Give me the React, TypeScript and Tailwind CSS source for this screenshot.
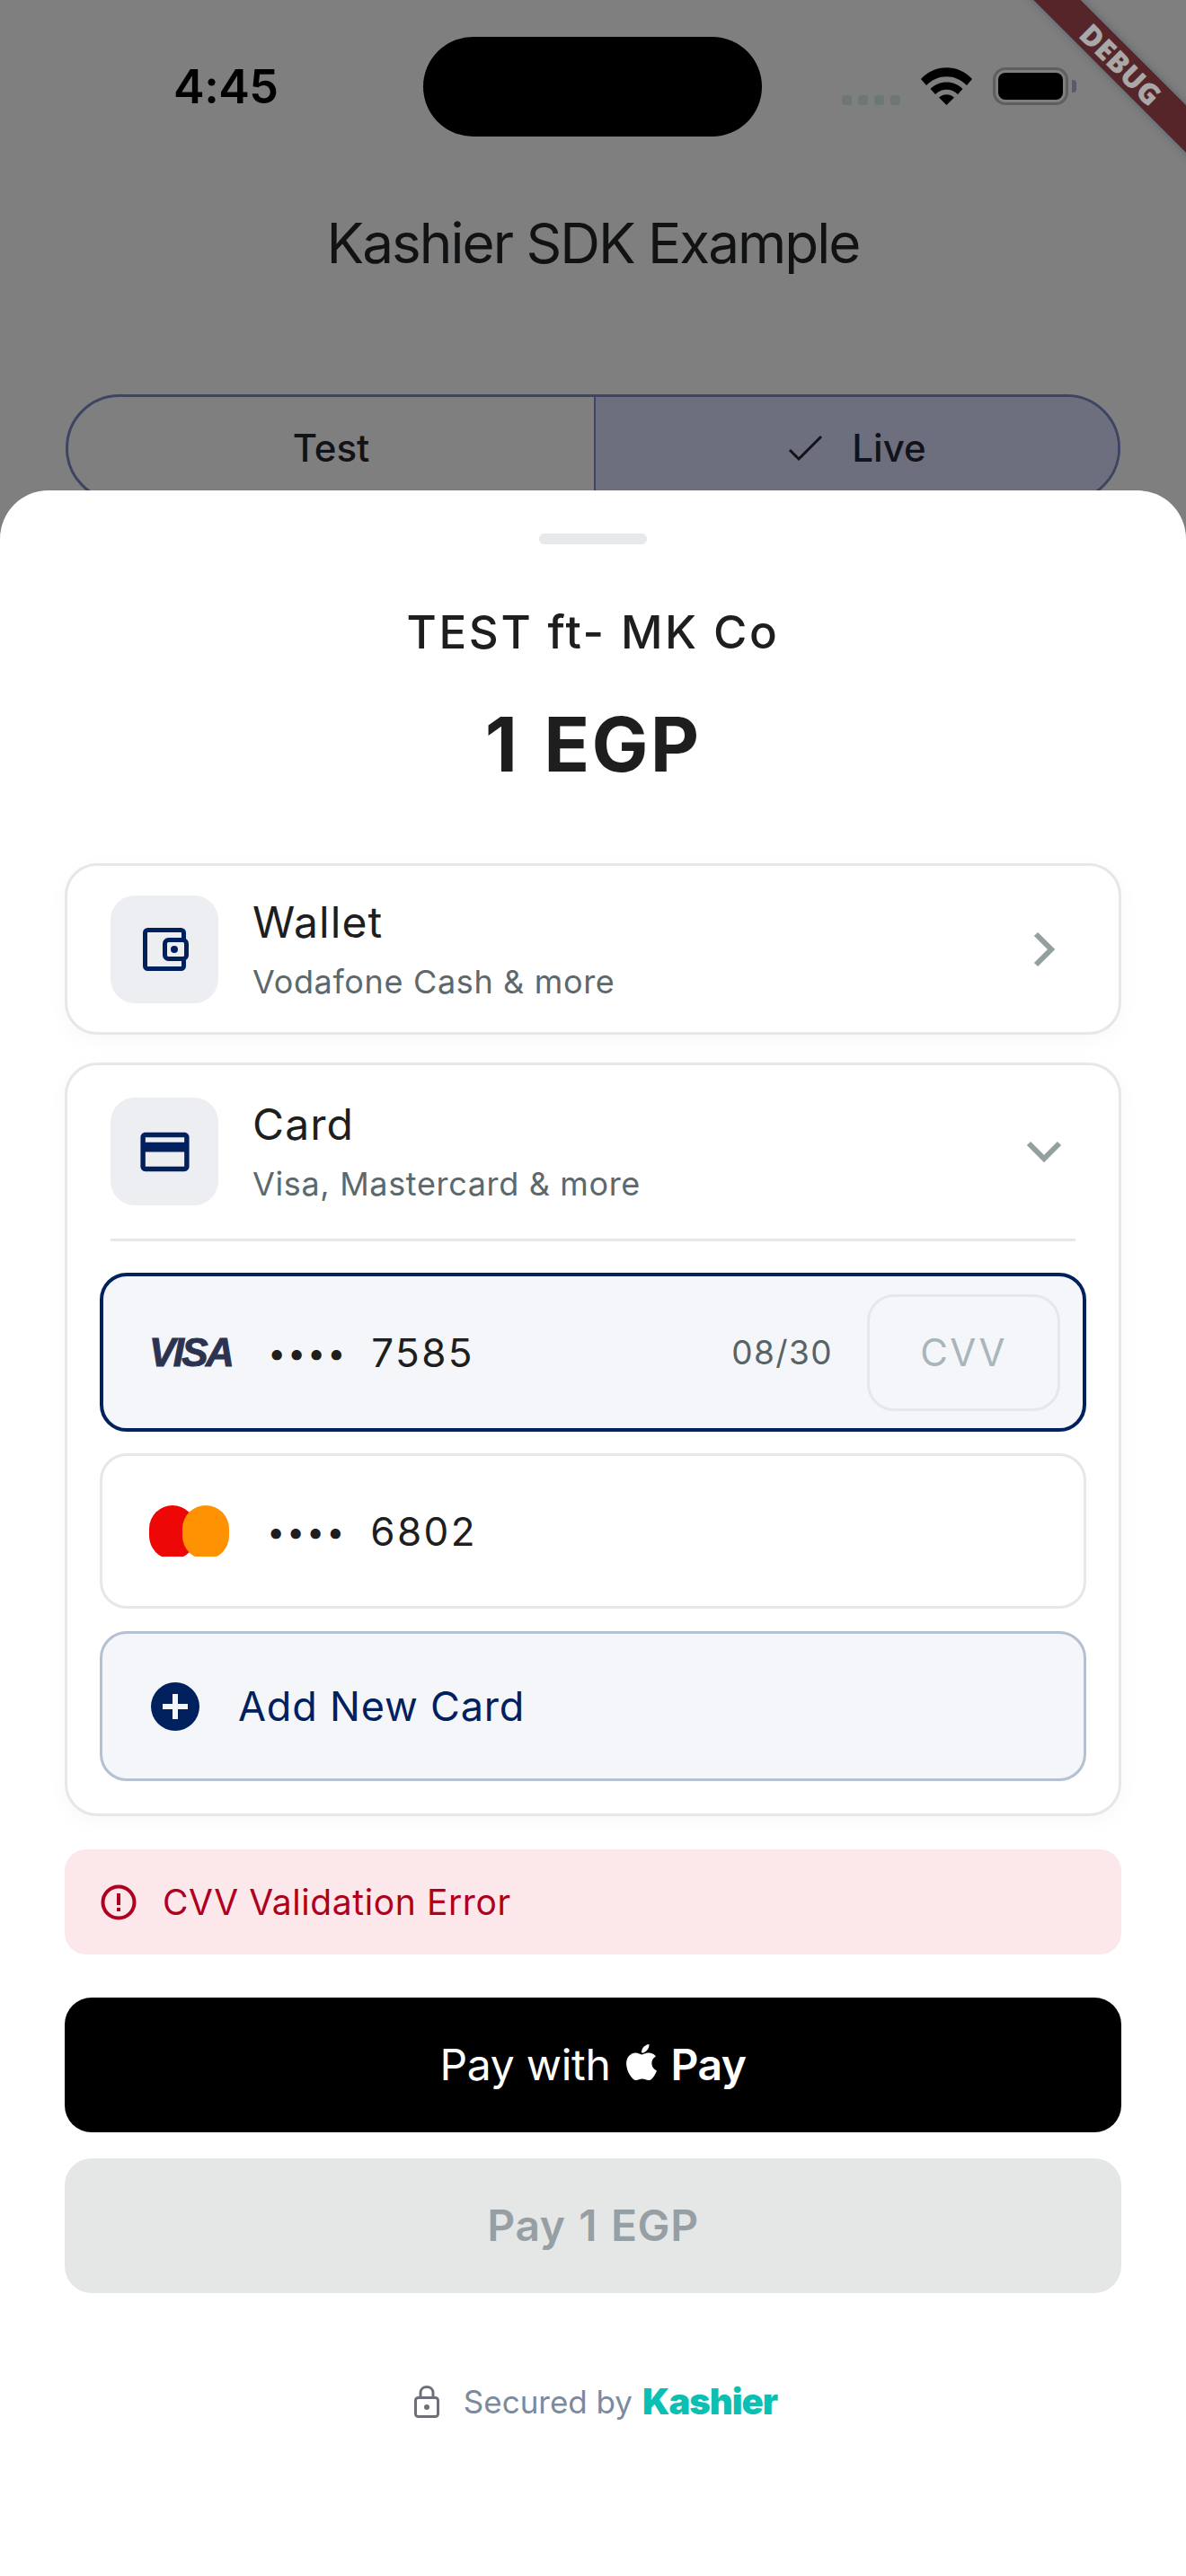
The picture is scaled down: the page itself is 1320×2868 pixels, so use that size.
import { FaApple } from 'react-icons/fa';
import { MdOutlineCreditCard } from 'react-icons/md';

function WalletIcon() {
  return (
    <svg width="60" height="60" viewBox="0 0 60 60" fill="none">
      <rect x="8.5" y="8.5" width="43" height="43" rx="3" stroke="#00205e" strokeWidth="5" />
      <rect x="30.5" y="19.5" width="24" height="21" rx="4" fill="#eceef2" stroke="#00205e" strokeWidth="5" />
      <circle cx="41" cy="30" r="4" fill="#00205e" />
    </svg>
  );
}

function WifiIcon() {
  return (
    <svg width="57" height="42" viewBox="0 0 57 42" fill="#000">
      <path d="M0 13C15-4 42-4 57 13L51 20C38 7 19 7 6 20Z" />
      <path d="M10.5 24C20 14 37 14 46.5 24L41 30C34 23 23 23 16 30Z" />
      <path d="M20 33.5C25 29 32 29 37 33.5L28.5 42Z" />
    </svg>
  );
}

function StatusBar() {
  return (
    <div className="flex pt-[41px] pl-[193px]">
      <div className="w-[278px] h-[76px] flex items-end">
        <span className="text-[52px] leading-[50px] font-semibold text-black tracking-[-0.5px] mb-[-5px]">4:45</span>
      </div>
      <div className="w-[377px] h-[111px] rounded-full bg-black" />
      <div className="h-[76px] flex items-end ml-[89px]">
        <div className="flex gap-[7px] mb-0">
          {[0, 1, 2, 3].map((i) => (
            <div key={i} className="w-[11px] h-[11px] rounded-[3px] bg-[#6e7678]" />
          ))}
        </div>
        <div className="ml-[23px]">
          <WifiIcon />
        </div>
        <div className="ml-[23px] w-[84px] h-[42px] rounded-[14px] border-[3px] border-[#5f5f61] flex items-center justify-center">
          <div className="w-[72px] h-[30px] rounded-[8px] bg-black" />
        </div>
        <div className="ml-[4px] mb-[14px] w-[5px] h-[14px] rounded-r-[4px] bg-[#555a75]" />
      </div>
    </div>
  );
}

function ModeSwitch() {
  return (
    <div className="mt-[128px] mx-[73px] h-[120px] rounded-full border-[3px] border-[#3e4463] flex overflow-hidden text-[42px] font-[450] text-[#111318]">
      <div className="w-[585px] flex items-start justify-center pt-[33px]">
        <span className="leading-[48px]">Test</span>
      </div>
      <div className="flex-1 border-l-[2px] border-[#3e4463] bg-[#6d6f7e] flex items-start justify-center pt-[33px]">
        <svg width="42" height="30" viewBox="0 0 42 30" fill="none" className="mt-[9px]">
          <path d="M3 17L13 27L38 2" stroke="#111318" strokeWidth="3" />
        </svg>
        <span className="leading-[48px] ml-[30px]">Live</span>
      </div>
    </div>
  );
}

function MethodHeader({ title, subtitle, icon, chevron }: { title: string; subtitle: string; icon: React.ReactNode; chevron: React.ReactNode }) {
  return (
    <div className="flex items-center">
      <div className="w-[120px] h-[120px] rounded-[27px] bg-[#eceef2] flex items-center justify-center">{icon}</div>
      <div className="ml-[38px] flex-1">
        <div className="text-[48px] leading-[54px] tracking-[1.1px] text-[#1e1e1e]">{title}</div>
        <div className="mt-[18px] text-[36px] leading-[42px] tracking-[0.65px] text-[#5d686c]">{subtitle}</div>
      </div>
      {chevron}
    </div>
  );
}

function CardNumber({ last4 }: { last4: string }) {
  return (
    <>
      <span className="text-[36px] leading-[40px] tracking-[1.8px] text-[#1e1e1e]">••••</span>
      <span className="ml-[27px] text-[44px] leading-[50px] tracking-[2.4px] text-[#1e1e1e]">{last4}</span>
    </>
  );
}

export default function App() {
  return (
    <div className="relative w-[1320px] h-[2868px] overflow-hidden bg-[#7f7f7f] font-['Inter','Noto_Sans',sans-serif]">
      <StatusBar />
      <div className="mt-[79px] text-center text-[62px] leading-[80px] tracking-[-2px] text-[#111214]">Kashier SDK Example</div>
      <ModeSwitch />

      {/* debug ribbon */}
      <div className="absolute left-[1048px] top-[53px] w-[400px] h-[37px] rotate-45 bg-[#55252a] shadow-[0_0_10px_rgba(70,90,100,0.7)] flex items-center justify-center">
        <span className="text-[32px] leading-[37px] font-extrabold tracking-[0.5px] text-[#aaa7a7] font-['Open_Sans',sans-serif]">DEBUG</span>
      </div>

      {/* bottom sheet */}
      <div className="absolute left-0 right-0 top-[546px] bottom-0 bg-white rounded-t-[54px] px-[72px]">
        <div className="mx-auto mt-[48px] w-[120px] h-[12px] rounded-[6px] bg-[#e6e8e9]" />
        <div className="mt-[68px] text-center text-[51px] leading-[60px] font-[550] tracking-[2.6px] text-[#1e1e1e]">TEST ft- MK Co</div>
        <div className="mt-[45px] text-center text-[84px] leading-[100px] font-bold tracking-[2.2px] [word-spacing:5px] text-[#1e1e1e]">1 EGP</div>

        <div className="mt-[82px] h-[191px] rounded-[36px] border-[3px] border-[#e5e7e8] bg-white shadow-[0_6px_24px_rgba(0,0,0,0.03)] px-[48px] flex items-center">
          <div className="w-full">
            <MethodHeader
              title="Wallet"
              subtitle="Vodafone Cash & more"
              icon={<WalletIcon />}
              chevron={
                <svg width="30" height="42" viewBox="0 0 30 42" fill="none" className="mr-[19px]">
                  <path d="M5 4L22 21L5 38" stroke="#93a09f" strokeWidth="6" />
                </svg>
              }
            />
          </div>
        </div>

        <div className="mt-[31px] rounded-[36px] border-[3px] border-[#e5e7e8] bg-white shadow-[0_6px_24px_rgba(0,0,0,0.03)] pt-[36px] pb-[36px]">
          <div className="px-[48px]">
            <MethodHeader
              title="Card"
              subtitle="Visa, Mastercard & more"
              icon={<MdOutlineCreditCard size={65} color="#00205e" />}
              chevron={
                <svg width="42" height="30" viewBox="0 0 42 30" fill="none" className="mr-[14px]">
                  <path d="M4 6L21 23L38 6" stroke="#93a09f" strokeWidth="6" />
                </svg>
              }
            />
            <div className="mt-[37px] h-[3px] bg-[#e5e7e8]" />
          </div>

          <div className="mt-[35px] mx-[36px] flex flex-col">
            <div className="h-[177px] rounded-[30px] border-[4px] border-[#00205e] bg-[#f4f6f9] flex items-center pl-[51px] pr-[25px]">
              <span className="w-[132px] text-[44px] leading-[50px] font-bold italic tracking-[-2.6px] text-[#2b3350] [-webkit-text-stroke:1px_#2b3350] font-['Liberation_Sans',sans-serif]">VISA</span>
              <CardNumber last4="7585" />
              <span className="ml-auto text-[37px] leading-[44px] tracking-[1.4px] text-[#586367]">08/30</span>
              <div className="ml-[38px] w-[215px] h-[130px] rounded-[30px] border-[3px] border-[#e5e7ea] flex items-center justify-center text-[42px] tracking-[2.5px] text-[#a8b5bb]">CVV</div>
            </div>

            <div className="mt-[24px] h-[173px] rounded-[30px] border-[3px] border-[#e5e7e8] bg-white flex items-center pl-[52px]">
              <div className="w-[131px]">
                <div className="flex w-[90px] h-[57px] overflow-hidden">
                  <div className="w-[52px] h-[60px] shrink-0 rounded-full bg-[#ee0707]" />
                  <div className="w-[52px] h-[60px] shrink-0 -ml-[15px] rounded-full bg-[#ff9203]" />
                </div>
              </div>
              <CardNumber last4="6802" />
            </div>

            <div className="mt-[25px] h-[167px] rounded-[30px] border-[3px] border-[#b5c0d0] bg-[#f4f6f9] flex items-center pl-[54px]">
              <svg width="54" height="54" viewBox="0 0 54 54">
                <circle cx="27" cy="27" r="27" fill="#00205e" />
                <path d="M27 13V41M13 27H41" stroke="#f4f6f9" strokeWidth="6" />
              </svg>
              <span className="ml-[43px] text-[45px] leading-[54px] font-[430] tracking-[0.8px] text-[#00205e]">Add New Card</span>
            </div>
          </div>
        </div>

        <div className="mt-[37px] h-[117px] rounded-[24px] bg-[#fce8ea] flex items-center pl-[40px]">
          <svg width="40" height="40" viewBox="0 0 40 40" fill="none">
            <circle cx="20" cy="20" r="17.5" stroke="#b00020" strokeWidth="4" />
            <path d="M20 10V23" stroke="#b00020" strokeWidth="4" />
            <path d="M20 26V30" stroke="#b00020" strokeWidth="4" />
          </svg>
          <span className="ml-[29px] text-[39px] leading-[46px] tracking-[0.6px] text-[#b00020]">CVV Validation Error</span>
        </div>

        <div className="mt-[48px] h-[150px] rounded-[30px] bg-black flex items-center justify-center text-[48px] text-white">
          <span className="leading-[56px] tracking-[-0.3px]">Pay with</span>
          <FaApple size={46} className="ml-[12px] mb-[6px]" />
          <span className="ml-[9px] leading-[56px] font-semibold tracking-[-0.5px]">Pay</span>
        </div>

        <div className="mt-[29px] h-[150px] rounded-[30px] bg-[#e5e7e7] flex items-center justify-center text-[48px] leading-[56px] font-semibold tracking-[0.6px] [word-spacing:2px] text-[#969fa3]">Pay 1 EGP</div>

        <div className="mt-[99px] pl-[6px] flex items-center justify-center">
          <svg width="28" height="36" viewBox="0 0 28 36" fill="none">
            <rect x="1.5" y="13.5" width="25" height="21" rx="3" stroke="#6e7079" strokeWidth="3" />
            <path d="M7 13V8C7 4 10 1.5 14 1.5C18 1.5 21 4 21 8V13" stroke="#6e7079" strokeWidth="3" />
            <circle cx="14" cy="24" r="3" fill="#6e7079" />
          </svg>
          <span className="ml-[27px] text-[35px] leading-[44px] text-[#7b8a9c]">Secured by</span>
          <span className="ml-[11px] text-[40px] leading-[44px] font-black tracking-[-1px] text-[#0bbfb3]">Kashier</span>
        </div>
      </div>
    </div>
  );
}
